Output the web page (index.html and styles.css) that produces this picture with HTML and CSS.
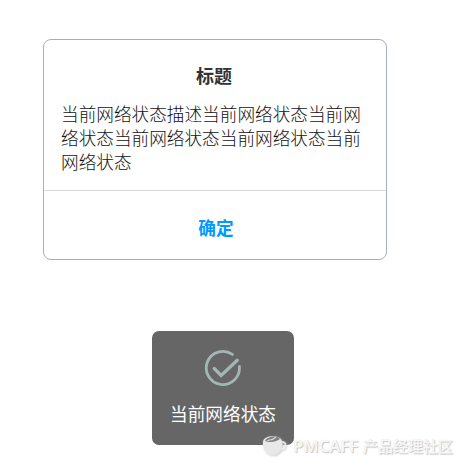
FILE: index.html
```
<!DOCTYPE html>
<html lang="zh-CN">
<head>
    <meta charset="utf-8">
    <title>网络状态</title>
    <meta name="viewport" content="width=device-width, initial-scale=1">
    <link rel="stylesheet" href="styles.css">
</head>
<body>

    <div class="dialog">
        <div class="dialog-body">
            <h2>标题</h2>
            <p>当前网络状态描述当前网络状态当前网络状态当前网络状态当前网络状态当前网络状态</p>
        </div>
        <button type="button" class="confirm">确定</button>
    </div>

    <div class="toast">
        <svg class="toast-icon" width="38" height="38" viewBox="0 0 38 38">
            <path d="M28.4 5.4A16.6 16.6 0 1 0 35.4 17.5"/>
            <path class="tick" d="M10.2 19.5L17.1 26.4L33.3 11.3"/>
        </svg>
        <span>当前网络状态</span>
    </div>

    <div class="watermark">
        <svg width="26" height="24" viewBox="0 0 26 24">
            <path class="cup" d="M2 8C2 1 20 0 21 8C22 15 18 21 12 21C6 21 1 15 2 8Z"/>
            <path class="coffee" d="M4 7C6 2 17 1 19 5C15 8 8 9 4 7Z"/>
            <path class="foam" d="M6 7C9 5 11 7 15 3"/>
            <path class="handle" d="M21 8C26 7 25 15 20 15"/>
        </svg>
        <span class="brand">PMCAFF</span>
        <span>产品经理社区</span>
    </div>

</body>
</html>
```

FILE: styles.css
```
html, body {
    margin: 0;
}

body {
    height: 467px;
    overflow: hidden;
    background-color: #fff;
    font-family: "Noto Sans CJK SC", sans-serif;
    font-size: 17.65px;
    color: #333;
}

.dialog {
    box-sizing: border-box;
    width: 344px;
    height: 221px;
    margin: 39px 0 0 43px;
    border: 1px solid #a3b1bf;
    border-radius: 8px;
    display: flex;
    flex-direction: column;
    float: left;
}

.dialog-body {
    box-sizing: border-box;
    height: 151px;
    padding: 23px 17px 0;
    border-bottom: 1px solid #d7d7d7;
}

.dialog h2 {
    margin: 0 2px 15px 0;
    font-size: 18px;
    line-height: 24px;
    text-align: center;
}

.dialog p {
    margin: 0;
    line-height: 24px;
    font-weight: 300;
    color: #111;
}

.confirm {
    flex: 1;
    padding: 4px 0 0 2px;
    border: none;
    background: none;
    font-family: inherit;
    font-size: 17.65px;
    font-weight: bold;
    color: #0099ff;
    cursor: pointer;
}

.toast {
    box-sizing: border-box;
    width: 142px;
    height: 114px;
    padding-top: 18px;
    border-radius: 7px;
    background-color: #666;
    color: #fff;
    line-height: 24px;
    display: flex;
    flex-direction: column;
    align-items: center;
    gap: 15px;
    position: absolute;
    left: 152px;
    top: 331px;
}

.toast-icon {
    fill: none;
    stroke: #a5b4b4;
    stroke-width: 2.8;
    stroke-linecap: round;
}

.tick {
    stroke-width: 3.3;
}

/* sits over the corner of the toast */
.watermark {
    position: absolute;
    left: 261px;
    top: 434px;
    display: flex;
    align-items: center;
    height: 24px;
    font-size: 15px;
    font-weight: 500;
    line-height: 24px;
    color: #f8f8f8;
    text-shadow: 1px 1px 1px #c4c4c4, 0 0 1px #ddd;
    white-space: nowrap;
}

.watermark svg {
    margin-right: 6px;
    filter: drop-shadow(1px 1px 1px #ccc);
}

.brand {
    margin-right: 5px;
    font-family: "Open Sans", sans-serif;
    font-size: 16.7px;
    font-weight: 600;
}

.cup {
    fill: #e8e8e8;
}

.coffee {
    fill: #808080;
}

.foam {
    fill: none;
    stroke: #ccc;
    stroke-width: 1.5;
}

.handle {
    fill: none;
    stroke: #eee;
    stroke-width: 1.5;
}
```
